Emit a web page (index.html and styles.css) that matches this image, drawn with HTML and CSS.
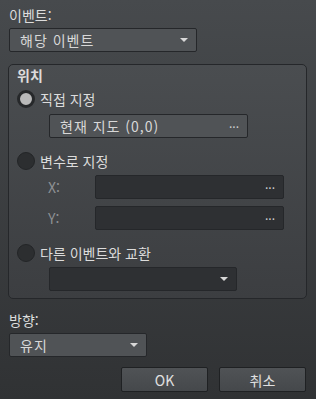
FILE: index.html
```html
<!DOCTYPE html>
<html lang="ko">
<head>
    <meta charset="UTF-8">
    <title>이벤트 위치 설정</title>
    <link rel="stylesheet" href="styles.css">
</head>
<body>
    <div class="dialog">
        <div class="label">이벤트:</div>
        <div class="select event-select">
            <span>해당 이벤트</span>
            <span class="arrow"></span>
        </div>

        <div class="group">
            <div class="group-title">위치</div>

            <div class="radio-row first">
                <span class="radio checked"></span>
                <span>직접 지정</span>
            </div>
            <div class="field map-field">
                <span>현재 지도 (0,0)</span>
                <span class="dots">···</span>
            </div>

            <div class="radio-row">
                <span class="radio"></span>
                <span>변수로 지정</span>
            </div>
            <div class="xy-row">
                <span class="xy-label">X:</span>
                <div class="field dark"><span></span><span class="dots">···</span></div>
            </div>
            <div class="xy-row second">
                <span class="xy-label">Y:</span>
                <div class="field dark"><span></span><span class="dots">···</span></div>
            </div>

            <div class="radio-row">
                <span class="radio"></span>
                <span>다른 이벤트와 교환</span>
            </div>
            <div class="select dark swap-select">
                <span></span>
                <span class="arrow"></span>
            </div>
        </div>

        <div class="label dir-label">방향:</div>
        <div class="select dir-select">
            <span>유지</span>
            <span class="arrow"></span>
        </div>

        <div class="buttons">
            <button class="btn">OK</button>
            <button class="btn">취소</button>
        </div>
    </div>
</body>
</html>
```

FILE: styles.css
```css
html, body {
    margin: 0;
    height: 100%;
}

body {
    background: linear-gradient(#474a4d, #303234);
    font-family: "Noto Sans CJK KR", "Noto Sans", sans-serif;
    font-size: 14px;
    color: #dcdcdc;
}

.dialog {
    padding: 5px 9px 0 8px;
}

.label {
    height: 20px;
    line-height: 20px;
    padding-left: 1px;
}

.select,
.field {
    display: flex;
    align-items: center;
    justify-content: space-between;
    box-sizing: border-box;
    height: 24px;
    padding: 0 8px 0 10px;
    border: 1px solid #25272a;
    border-radius: 2px;
    background: #505356;
    color: #d8d8d8;
    letter-spacing: 1px;
}

.select.dark,
.field.dark {
    background: #2e3033;
}

.arrow {
    width: 0;
    height: 0;
    border-left: 4px solid transparent;
    border-right: 4px solid transparent;
    border-top: 4px solid #d8d8d8;
}

.dots {
    color: #cfcfcf;
    font-size: 12px;
    letter-spacing: 0;
}

.event-select {
    margin-top: 3px;
    margin-left: 1px;
    width: 188px;
}

.group {
    margin-top: 12px;
    box-sizing: border-box;
    width: 299px;
    height: 235px;
    border: 1px solid #25272a;
    border-radius: 5px;
    background: linear-gradient(#4a4d50, #3c3e41);
    padding: 1px 0 0 8px;
}

.group-title {
    font-weight: bold;
    line-height: 18px;
}

.radio-row {
    display: flex;
    align-items: center;
    gap: 5px;
    height: 18px;
    margin-top: 14px;
}

.radio-row.first {
    margin-top: 6px;
}

.radio {
    box-sizing: border-box;
    width: 18px;
    height: 18px;
    border-radius: 50%;
    background: #2c2e30;
    border: 1px solid #232527;
}

.radio.checked {
    background: #b9b9b9;
    border: 3px solid #26282a;
}

.map-field {
    margin-top: 6px;
    margin-left: 32px;
    width: 199px;
}

.xy-row {
    display: flex;
    align-items: center;
    margin-top: 5px;
}

.xy-row.second {
    margin-top: 7px;
}

.xy-label {
    width: 47px;
    padding-left: 31px;
    color: #8e9194;
}

.xy-row .field {
    width: 189px;
}

.swap-select {
    margin-top: 5px;
    margin-left: 32px;
    width: 188px;
}

.dir-label {
    margin-top: 11px;
}

.dir-select {
    margin-top: 3px;
    margin-left: 1px;
    width: 138px;
}

.buttons {
    display: flex;
    justify-content: flex-end;
    gap: 11px;
    margin-top: 10px;
    padding-right: 1px;
}

.btn {
    box-sizing: border-box;
    width: 87px;
    height: 25px;
    border: 1px solid #1f2123;
    border-radius: 2px;
    background: linear-gradient(#505356, #45484b);
    color: #e0e0e0;
    font-family: "Noto Sans CJK KR", "Noto Sans", sans-serif;
    font-size: 14px;
    padding: 0;
}
```
